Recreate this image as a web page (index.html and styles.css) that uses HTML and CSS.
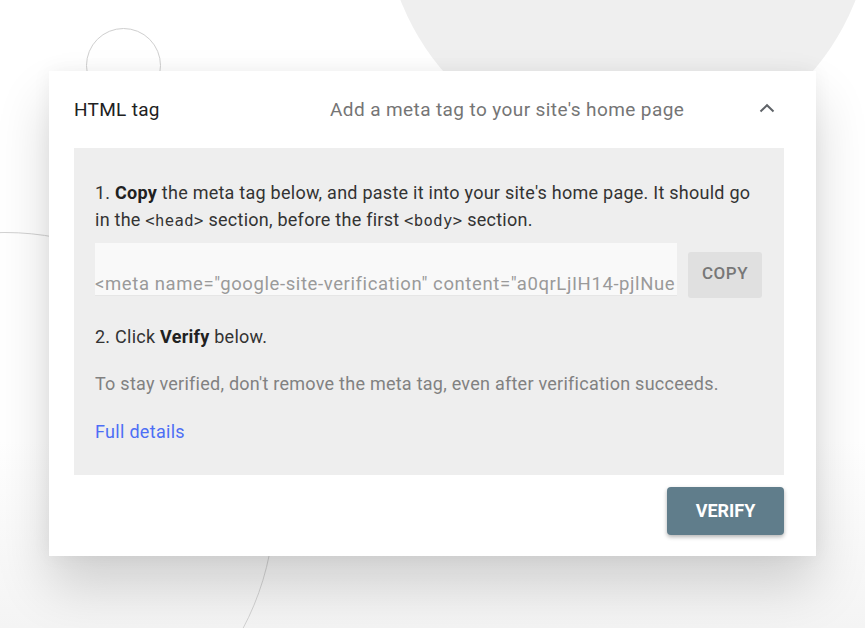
FILE: index.html
```html
<!DOCTYPE html>
<html lang="en">
<head>
<meta charset="utf-8">
<title>HTML tag verification</title>
<link rel="stylesheet" href="styles.css">
</head>
<body>
<div class="scene">
  <div class="deco deco-blob"></div>
  <div class="deco deco-ring-small"></div>
  <div class="deco deco-ring-large"></div>

  <section class="card">
    <header class="card-header">
      <h2 class="card-title">HTML tag</h2>
      <p class="card-subtitle">Add a meta tag to your site's home page</p>
      <svg class="chevron" width="18" height="12" viewBox="0 0 18 12" aria-hidden="true">
        <path d="M2.5 9.5 L9 3.2 L15.5 9.5" fill="none" stroke="#5f6368" stroke-width="2"/>
      </svg>
    </header>

    <div class="panel">
      <p class="step">1. <b>Copy</b> the meta tag below, and paste it into your site's home page. It should go in the <code>&lt;head&gt;</code> section, before the first <code>&lt;body&gt;</code> section.</p>

      <div class="copy-row">
        <div class="field">&lt;meta name="google-site-verification" content="a0qrLjIH14-pjlNue</div>
        <button class="btn-copy" type="button">COPY</button>
      </div>

      <p class="step step-two">2. Click <b>Verify</b> below.</p>
      <p class="note">To stay verified, don't remove the meta tag, even after verification succeeds.</p>
      <a class="link" href="#">Full details</a>
    </div>

    <footer class="card-footer">
      <button class="btn-verify" type="button">VERIFY</button>
    </footer>
  </section>
</div>
</body>
</html>
```

FILE: styles.css
```css
* { box-sizing: border-box; }

html, body {
  margin: 0;
  padding: 0;
}

body {
  width: 865px;
  height: 628px;
  overflow: hidden;
  background: #ffffff;
  font-family: Roboto, "Noto Sans", "Liberation Sans", sans-serif;
  color: #333333;
}

.scene {
  position: relative;
  width: 865px;
  height: 628px;
  overflow: hidden;
  padding: 71px 0 0 49px;
  background: linear-gradient(180deg, #ffffff 0%, #ffffff 70%, #f4f4f4 100%);
}

/* decorative background shapes */
.deco {
  position: absolute;
  border-radius: 50%;
}

.deco-blob {
  left: 384px;
  top: -332px;
  width: 488px;
  height: 488px;
  background: #efefef;
}

.deco-ring-small {
  left: 86px;
  top: 28px;
  width: 75px;
  height: 75px;
  border: 1px solid #cfcfcf;
}

.deco-ring-large {
  left: -265px;
  top: 232px;
  width: 540px;
  height: 540px;
  border: 1px solid #d2d2d2;
}

/* card */
.card {
  position: relative;
  width: 767px;
  height: 485px;
  background: #ffffff;
  box-shadow: 0 30px 50px rgba(0, 0, 0, 0.16), 0 0 18px rgba(0, 0, 0, 0.05);
  display: flex;
  flex-direction: column;
}

.card-header {
  height: 77px;
  padding: 0 40px 0 25px;
  display: grid;
  grid-template-columns: 256px 1fr auto;
  align-items: center;
}

.card-title {
  margin: 0;
  font-size: 19px;
  letter-spacing: 0.3px;
  font-weight: 400;
  color: #212121;
}

.card-subtitle {
  margin: 0;
  font-size: 19px;
  letter-spacing: 0.4px;
  color: #757575;
}

.chevron {
  display: block;
  margin-top: -4px;
}

/* panel */
.panel {
  margin: 0 32px 0 25px;
  height: 327px;
  background: #eeeeee;
  padding: 31px 21px 0 21px;
}

.step {
  margin: 0;
  font-size: 18px;
  letter-spacing: 0.25px;
  line-height: 27px;
  color: #333333;
}

.step b {
  font-weight: 700;
  color: #212121;
}

code {
  font-family: "DejaVu Sans Mono", "Liberation Mono", monospace;
  font-size: 15.5px;
  letter-spacing: 0.4px;
  color: #333333;
}

.copy-row {
  margin-top: 8px;
  display: flex;
  align-items: flex-start;
  gap: 11px;
}

.field {
  width: 582px;
  height: 53px;
  flex: none;
  background: #f9f9f9;
  border-bottom: 1px solid #e6e6e6;
  color: #9a9a9a;
  font-size: 18.5px;
  letter-spacing: 0.6px;
  line-height: 20px;
  padding-top: 31px;
  white-space: nowrap;
  overflow: hidden;
}

.btn-copy {
  margin-top: 9px;
  width: 74px;
  height: 46px;
  flex: none;
  border: 0;
  border-radius: 3px;
  background: #e0e0e0;
  color: #777777;
  font-family: Roboto, "Noto Sans", sans-serif;
  font-size: 17px;
  font-weight: 500;
  letter-spacing: 0.5px;
  padding: 0 0 4px 0;
}

.step-two {
  margin-top: 25px;
}

.note {
  margin: 20px 0 0 0;
  font-size: 18px;
  letter-spacing: 0.25px;
  line-height: 27px;
  color: #818181;
}

.link {
  display: inline-block;
  margin-top: 21px;
  font-size: 18px;
  letter-spacing: 0.3px;
  line-height: 27px;
  color: #4d6ef5;
  text-decoration: none;
}

/* footer */
.card-footer {
  display: flex;
  justify-content: flex-end;
  padding: 12px 32px 0 0;
}

.btn-verify {
  width: 117px;
  height: 48px;
  border: 0;
  border-radius: 4px;
  background: #607d8b;
  color: #ffffff;
  font-family: Roboto, "Noto Sans", sans-serif;
  font-size: 18px;
  font-weight: 700;
  box-shadow: 0 2px 4px rgba(0, 0, 0, 0.3);
  padding: 0 0 2px 0;
}
```
